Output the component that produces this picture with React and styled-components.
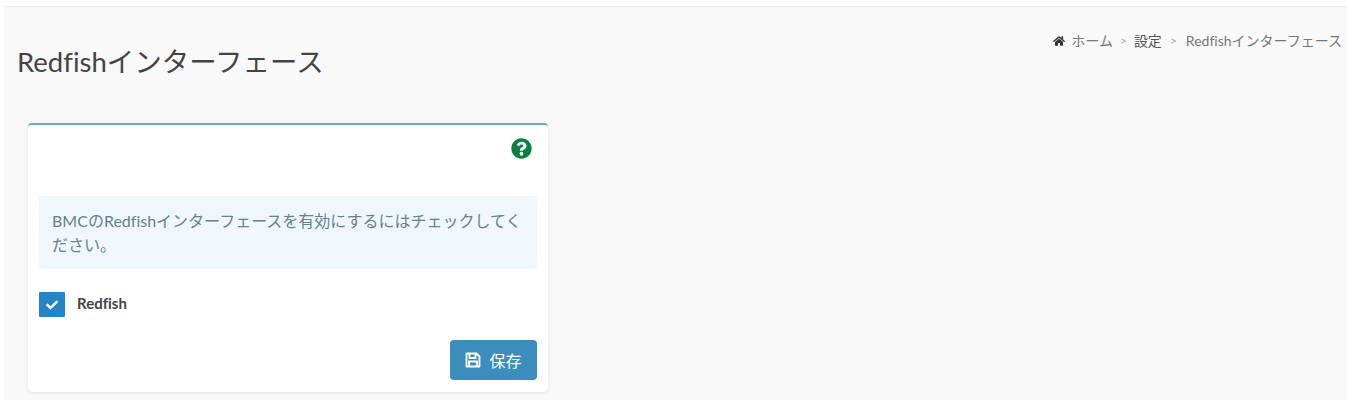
import styled, { createGlobalStyle } from "styled-components";
import { FaHome, FaCheck, FaQuestionCircle } from "react-icons/fa";

const Global = createGlobalStyle`
  html, body {
    margin: 0;
    padding: 0;
    background: #fff;
    overflow: hidden;
  }
  body {
    font-family: Lato, "Noto Sans CJK JP", sans-serif;
    font-variant-ligatures: none;
  }
`;

const Content = styled.main`
  margin: 6px 0 0 4px;
  height: 394px;
  background: #f9f9f9;
  border-top: 1px solid #eeeeee;
  box-sizing: border-box;
  padding: 0 5px 0 13px;
`;

const Header = styled.header`
  display: flex;
  justify-content: space-between;
  align-items: flex-start;
  height: 116px;
`;

const Title = styled.h1`
  margin: 33px 0 0;
  font-size: 27.5px;
  line-height: 44px;
  font-weight: 400;
  color: #444;
`;

const Breadcrumb = styled.nav`
  display: flex;
  align-items: center;
  margin-top: 24px;
  font-size: 14px;
  line-height: 20px;
  color: #6f6f6f;
`;

const Crumb = styled.span`
  color: ${(p) => (p.$dark ? "#555" : "#777")};
  display: inline-flex;
  align-items: center;
  gap: 6px;

  svg {
    font-size: 12px;
    color: #333;
  }
`;

const Sep = styled.span`
  color: #aaa;
  font-size: 12px;
  margin: ${(p) => p.$margin || "0 7px"};
`;

const Card = styled.section`
  width: 520px;
  height: 269px;
  margin-left: 11px;
  box-sizing: border-box;
  background: #fff;
  border-top: 2px solid #6fa8cd;
  border-radius: 4px;
  box-shadow: 0 1px 4px rgba(0, 0, 0, 0.1);
  padding: 13px 11px 0;
  display: flex;
  flex-direction: column;
`;

const HelpRow = styled.div`
  display: flex;
  justify-content: flex-end;
  height: 58px;
  padding-right: 5px;

  svg {
    font-size: 21px;
    color: #0b8043;
  }
`;

const Notice = styled.p`
  margin: 0;
  background: #eff7fd;
  padding: 13px 13px;
  font-size: 16px;
  line-height: 24px;
  height: 73px;
  box-sizing: border-box;
  color: #66808f;
`;

const CheckRow = styled.label`
  display: flex;
  align-items: center;
  gap: 12px;
  margin-top: 23px;
  font-size: 15px;
  font-weight: 700;
  color: #444;
`;

const CheckLabel = styled.span`
  padding-bottom: 3px;
`;

const CheckBox = styled.span`
  width: 26px;
  height: 25px;
  background: #2484c6;
  border-radius: 1px;
  display: flex;
  align-items: center;
  justify-content: center;
  color: #fff;
  font-size: 12px;
`;

const Footer = styled.div`
  display: flex;
  justify-content: flex-end;
  margin-top: 23px;
`;

const SaveButton = styled.button`
  width: 87px;
  height: 40px;
  border: none;
  border-radius: 4px;
  background: #3c8dbc;
  color: #fff;
  font: inherit;
  font-size: 16px;
  display: flex;
  align-items: center;
  justify-content: center;
  gap: 8px;
`;

function SaveIcon() {
  return (
    <svg width="16" height="16" viewBox="0 0 16 16" fill="none" stroke="currentColor" strokeWidth="1.8">
      <path d="M1.5 1.5H11.5L14.5 4.5V14.5H1.5Z" strokeLinejoin="round" />
      <path d="M4.5 1.5V6H10.5V1.5" />
      <path d="M4 14.5V9.5H12V14.5" />
    </svg>
  );
}

export default function App() {
  return (
    <>
      <Global />
      <Content>
        <Header>
          <Title>Redfishインターフェース</Title>
          <Breadcrumb>
            <Crumb>
              <FaHome />
              ホーム
            </Crumb>
            <Sep>&gt;</Sep>
            <Crumb $dark>設定</Crumb>
            <Sep $margin="0 9px 0 8px">&gt;</Sep>
            <Crumb>Redfishインターフェース</Crumb>
          </Breadcrumb>
        </Header>
        <Card>
          <HelpRow>
            <FaQuestionCircle />
          </HelpRow>
          <Notice>BMCのRedfishインターフェースを有効にするにはチェックしてください。</Notice>
          <CheckRow>
            <CheckBox>
              <FaCheck />
            </CheckBox>
            <CheckLabel>Redfish</CheckLabel>
          </CheckRow>
          <Footer>
            <SaveButton>
              <SaveIcon />
              保存
            </SaveButton>
          </Footer>
        </Card>
      </Content>
    </>
  );
}
